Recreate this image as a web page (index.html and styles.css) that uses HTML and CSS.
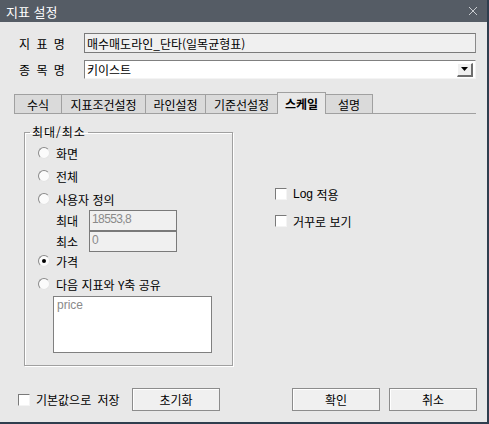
FILE: index.html
```html
<!DOCTYPE html>
<html lang="ko">
<head>
    <meta charset="UTF-8">
    <title>지표 설정</title>
    <link rel="stylesheet" href="styles.css">
</head>
<body>
    <div class="window">
        <div class="titlebar">
            <span>지표 설정</span>
            <svg class="close" width="10" height="10" viewBox="0 0 10 10">
                <path d="M1 1 L9 9 M9 1 L1 9" stroke="#c9ccd0" stroke-width="1" fill="none"/>
            </svg>
        </div>

        <div class="field-row first">
            <label class="field-label">지 표 명</label>
            <div class="text-box readonly">매수매도라인_단타(일목균형표)</div>
        </div>
        <div class="field-row">
            <label class="field-label">종 목 명</label>
            <div class="text-box combo">
                <span>키이스트</span>
                <span class="drop-btn">
                    <svg width="7" height="4" viewBox="0 0 7 4"><path d="M0 0 H7 L3.5 4 Z" fill="#000"/></svg>
                </span>
            </div>
        </div>

        <div class="tabs">
            <div class="tab" style="width: 48px">수식</div>
            <div class="tab" style="width: 84px">지표조건설정</div>
            <div class="tab" style="width: 60px">라인설정</div>
            <div class="tab" style="width: 72px">기준선설정</div>
            <div class="tab active" style="width: 49px">스케일</div>
            <div class="tab" style="width: 47px">설명</div>
        </div>

        <div class="panel">
            <fieldset class="group">
                <legend>최대/최소</legend>
                <div class="opt"><span class="radio"></span>화면</div>
                <div class="opt"><span class="radio"></span>전체</div>
                <div class="opt"><span class="radio"></span>사용자 정의</div>
                <div class="range-row">
                    <span class="range-label">최대</span>
                    <div class="num-box">18553,8</div>
                </div>
                <div class="range-row">
                    <span class="range-label">최소</span>
                    <div class="num-box">0</div>
                </div>
                <div class="opt short"><span class="radio checked"></span>가격</div>
                <div class="opt share"><span class="radio"></span>다음 지표와 Y축 공유</div>
                <div class="listbox">price</div>
            </fieldset>

            <div class="side">
                <div class="check-row"><span class="check"></span><span class="latin">Log</span>&nbsp;적용</div>
                <div class="check-row second"><span class="check"></span>거꾸로 보기</div>
            </div>
        </div>

        <div class="bottom">
            <div class="save-opt"><span class="check"></span>기본값으로 저장</div>
            <button class="btn">초기화</button>
            <div class="spacer"></div>
            <button class="btn">확인</button>
            <button class="btn">취소</button>
        </div>
    </div>
</body>
</html>
```

FILE: styles.css
```css
body {
    margin: 0;
    font-family: "Noto Sans CJK KR", "Liberation Sans", sans-serif;
    font-size: 12px;
    color: #000;
}

.window {
    width: 489px;
    height: 424px;
    box-sizing: border-box;
    background-color: #e8e8e8;
    border-right: 2px solid #2f3e4e;
    border-bottom: 2px solid #2f3e4e;
    display: flex;
    flex-direction: column;
}

.titlebar {
    height: 22px;
    flex-shrink: 0;
    background-color: #555c65;
    color: #fff;
    font-size: 13px;
    display: flex;
    align-items: center;
    justify-content: space-between;
    padding: 0 9px 0 6px;
}

.close {
    display: block;
}

/* name rows */
.field-row {
    display: flex;
    align-items: center;
    margin-top: 7px;
    padding-left: 19px;
}

.field-row.first {
    margin-top: 11px;
}

.field-label {
    width: 65px;
    font-size: 12px;
    word-spacing: 3px;
}

.text-box {
    width: 392px;
    height: 20px;
    box-sizing: border-box;
    display: flex;
    align-items: center;
    padding-left: 2px;
    font-size: 12px;
}

.readonly {
    background-color: #f0f0f0;
    border: 1px solid #7a7a7a;
    border-right-color: #8a8a8a;
}

.combo {
    height: 19px;
    background-color: #fff;
    border-top: 1px solid #808080;
    border-left: 1px solid #808080;
    border-bottom: 1px solid #f4f4f4;
    border-right: 1px solid #f4f4f4;
    justify-content: space-between;
    padding-right: 2px;
}

.drop-btn {
    width: 16px;
    height: 14px;
    box-sizing: border-box;
    background-color: #f0f0f0;
    border-top: 1px solid #fff;
    border-left: 1px solid #fff;
    border-right: 2px solid #6e6e6e;
    border-bottom: 2px solid #6e6e6e;
    display: flex;
    align-items: center;
    justify-content: center;
}

.drop-btn svg {
    display: block;
}

/* tabs */
.tabs {
    display: flex;
    align-items: flex-end;
    margin-top: 13px;
    padding-left: 14px;
    height: 21px;
}

.tab {
    height: 19px;
    box-sizing: border-box;
    background-color: #dadada;
    border: 1px solid #a0a0a0;
    border-bottom: none;
    border-left: none;
    display: flex;
    align-items: center;
    justify-content: center;
}

.tab:first-child {
    border-left: 1px solid #a0a0a0;
}

.tab.active {
    background-color: #e8e8e8;
    font-weight: bold;
    border-left: 1px solid #a0a0a0;
    margin-left: -1px;
    margin-bottom: -1px;
    height: 22px;
    position: relative;
}

.panel {
    margin-left: 14px;
    width: 462px;
    border-top: 1px solid #a0a0a0;
    display: flex;
    align-items: flex-start;
}

/* 최대/최소 group */
.group {
    margin: 11px 0 0 10px;
    padding: 0;
    width: 209px;
    height: 241px;
    box-sizing: border-box;
    border: 1px solid #a0a0a0;
    box-shadow: 1px 1px 0 #fff, inset 1px 1px 0 #fff;
}

.group legend {
    margin-left: 5px;
    padding: 0 2px;
    line-height: 14px;
    letter-spacing: 1px;
}

.opt {
    height: 22px;
    display: flex;
    align-items: center;
    padding-left: 13px;
}

.opt:first-of-type {
    margin-top: 3px;
}

.opt + .opt {
    margin-top: 1px;
}

.opt.short {
    height: 20px;
    margin-top: 0;
}

.opt.share {
    margin-top: 2px;
}

.radio {
    width: 12px;
    height: 12px;
    box-sizing: border-box;
    border-radius: 50%;
    background-color: #fbfbfb;
    border: 1px solid;
    border-color: #8a8a8a #e4e4e4 #e4e4e4 #8a8a8a;
    margin-right: 6px;
    display: flex;
    align-items: center;
    justify-content: center;
}

.radio.checked::after {
    content: "";
    width: 4px;
    height: 4px;
    border-radius: 50%;
    background-color: #000;
}

.range-row {
    height: 20px;
    display: flex;
    align-items: center;
    padding-left: 31px;
}

.range-row + .range-row {
    margin-top: 1px;
}

.range-label {
    width: 33px;
}

.num-box {
    width: 88px;
    height: 21px;
    box-sizing: border-box;
    background-color: #f0f0f0;
    border: 1px solid #7a7a7a;
    color: #8a8a8a;
    font-family: "Liberation Sans", sans-serif;
    font-size: 12px;
    letter-spacing: -0.6px;
    padding: 1px 0 0 2px;
}

.listbox {
    margin: 1px 0 0 28px;
    width: 159px;
    height: 57px;
    box-sizing: border-box;
    background-color: #fff;
    border: 1px solid #808080;
    color: #8a8a8a;
    font-family: "Liberation Sans", sans-serif;
    font-size: 12px;
    padding: 1px 0 0 3px;
}

/* right side options */
.side {
    margin-left: 42px;
}

.check-row {
    height: 20px;
    display: flex;
    align-items: center;
    margin-top: 70px;
}

.check-row.second {
    margin-top: 7px;
}

.check {
    width: 12px;
    height: 12px;
    box-sizing: border-box;
    background-color: #fff;
    border: 1px solid;
    border-color: #7a7a7a #f4f4f4 #f4f4f4 #7a7a7a;
    margin-right: 6px;
    flex-shrink: 0;
}

.latin {
    font-family: "Liberation Sans", sans-serif;
}

/* bottom buttons */
.bottom {
    display: flex;
    align-items: center;
    margin-top: 22px;
    padding: 0 10px 0 18px;
    height: 23px;
}

.save-opt {
    width: 114px;
    display: flex;
    align-items: center;
    word-spacing: 3px;
}

.btn {
    width: 88px;
    height: 23px;
    box-sizing: border-box;
    background-color: #f0f0f0;
    border: 1px solid #8c8c8c;
    box-shadow: inset 1px 1px 0 #fff;
    font-family: "Noto Sans CJK KR", sans-serif;
    font-size: 12px;
    padding: 0;
}

.spacer {
    flex: 1;
}

.btn + .btn {
    margin-left: 9px;
}
```
